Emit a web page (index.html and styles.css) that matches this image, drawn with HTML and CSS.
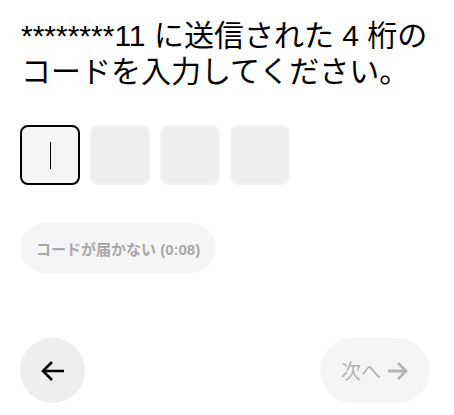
FILE: index.html
```html
<!DOCTYPE html>
<html lang="ja">
<head>
<meta charset="utf-8">
<link rel="stylesheet" href="styles.css">
</head>
<body>
<main class="page">
  <h1 class="title">********11 に送信された 4 桁のコードを入力してください。</h1>
  <div class="otp">
    <div class="otp-box active"><span class="caret"></span></div>
    <div class="otp-box"></div>
    <div class="otp-box"></div>
    <div class="otp-box"></div>
  </div>
  <div class="resend-row">
    <button class="resend">コードが届かない (0:08)</button>
  </div>
  <div class="nav">
    <button class="back" aria-label="戻る">
      <svg width="26" height="22" viewBox="0 0 26 22"><path d="M24 11H3M12 2L3 11l9 9" fill="none" stroke="#000" stroke-width="2.6"/></svg>
    </button>
    <button class="next">次へ
      <svg width="22" height="20" viewBox="0 0 22 20"><path d="M1 10h18M11 2l8 8-8 8" fill="none" stroke="#b3b3b3" stroke-width="2.8"/></svg>
    </button>
  </div>
</main>
</body>
</html>
```

FILE: styles.css
```css
html, body {
  margin: 0;
  padding: 0;
  background: #fff;
}
body {
  font-family: "Liberation Sans", "Noto Sans CJK JP", sans-serif;
  color: #000;
}
.page {
  width: 454px;
  height: 415px;
  box-sizing: border-box;
  padding: 18px 24px 12px 20px;
  display: flex;
  flex-direction: column;
}
.title {
  margin: 0 0 0 1px;
  font-size: 30px;
  line-height: 36px;
  font-weight: 400;
  letter-spacing: 0;
}
.otp {
  display: flex;
  gap: 10px;
  margin-top: 35px;
}
.otp-box {
  width: 60px;
  height: 60px;
  box-sizing: border-box;
  border-radius: 8px;
  background: #eeeeee;
  border: 2px solid #f3f3f3;
  display: flex;
  align-items: center;
  justify-content: center;
}
.otp-box.active {
  background: #f5f5f5;
  border-color: #000;
}
.caret {
  width: 1px;
  height: 27px;
  background: #000;
}
.resend-row {
  margin-top: 38px;
  display: flex;
}
.resend {
  height: 50px;
  border: none;
  border-radius: 25px;
  background: #f5f5f5;
  color: #a8a8a8;
  font-family: "Liberation Sans", "Noto Sans CJK JP", sans-serif;
  font-size: 15px;
  font-weight: 700;
  padding: 0 16px;
}
.nav {
  margin-top: auto;
  display: flex;
  justify-content: space-between;
  align-items: center;
}
.back {
  width: 65px;
  height: 65px;
  border: none;
  border-radius: 50%;
  background: #eeeeee;
  display: flex;
  align-items: center;
  justify-content: center;
  padding: 0;
}
.next {
  width: 110px;
  height: 65px;
  border: none;
  border-radius: 33px;
  background: #f5f5f5;
  color: #b3b3b3;
  font-family: "Liberation Sans", "Noto Sans CJK JP", sans-serif;
  font-size: 20px;
  display: flex;
  align-items: center;
  justify-content: center;
  gap: 6px;
  padding: 0;
}
```
